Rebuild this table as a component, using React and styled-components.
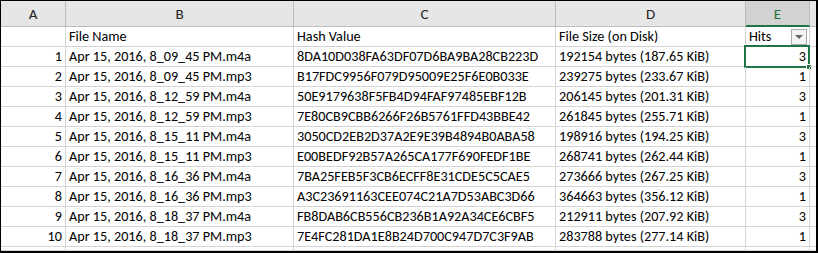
import React from "react";
import styled, { createGlobalStyle } from "styled-components";

const GlobalStyle = createGlobalStyle`
  body {
    margin: 0;
    background: #fff;
  }
  * {
    box-sizing: border-box;
  }
`;

const Sheet = styled.div`
  width: 818px;
  height: 253px;
  border-style: solid;
  border-color: #000;
  border-width: 1px 2px 2px 1px;
  overflow: hidden;
  font-family: Carlito, Lato, "Open Sans", sans-serif;
  font-size: 14.2px;
  color: #000;
`;

const Grid = styled.div`
  display: grid;
  grid-template-columns: 65px 228px 262px 190px 64px 1fr;
  grid-template-rows: 26px repeat(11, 20px) 1fr;
  height: 100%;
`;

const HeadCell = styled.div`
  background: ${(p) => (p.$active ? "#d2d2d2" : "#e6e6e6")};
  color: ${(p) => (p.$active ? "#217346" : "#222")};
  border-right: 1px solid ${(p) => (p.$last ? "transparent" : "#bdbdbd")};
  border-bottom: ${(p) => (p.$active ? "2px solid #217346" : "1px solid #bdbdbd")};
  display: flex;
  align-items: center;
  justify-content: center;
  font-size: 15px;
  padding-top: 1px;
`;

const Cell = styled.div`
  position: relative;
  border-right: 1px solid #d4d4d4;
  border-bottom: 1px solid #d4d4d4;
  display: flex;
  align-items: center;
  justify-content: ${(p) => (p.$right ? "flex-end" : "space-between")};
  padding: 0 3px 0 3px;
  white-space: nowrap;
  line-height: 19px;
`;

const FilterButton = styled.div`
  width: 16px;
  height: 16px;
  border: 1px solid #ababab;
  background: #f4f4f4;
  display: flex;
  align-items: center;
  justify-content: center;
  margin-right: -1px;
`;

const Arrow = styled.span`
  width: 0;
  height: 0;
  border-left: 4px solid transparent;
  border-right: 4px solid transparent;
  border-top: 4px solid #666;
`;

const Selection = styled.div`
  position: absolute;
  left: -2px;
  top: -2px;
  right: -1px;
  bottom: -2px;
  border: 2px solid #217346;
  pointer-events: none;
`;

const Handle = styled.div`
  position: absolute;
  right: -4px;
  bottom: -4px;
  width: 6px;
  height: 6px;
  background: #217346;
  border: 1px solid #fff;
`;

const columns = ["A", "B", "C", "D", "E"];

const rows = [
  ["Apr 15, 2016, 8_09_45 PM.m4a", "8DA10D038FA63DF07D6BA9BA28CB223D", "192154 bytes (187.65 KiB)", 3],
  ["Apr 15, 2016, 8_09_45 PM.mp3", "B17FDC9956F079D95009E25F6E0B033E", "239275 bytes (233.67 KiB)", 1],
  ["Apr 15, 2016, 8_12_59 PM.m4a", "50E9179638F5FB4D94FAF97485EBF12B", "206145 bytes (201.31 KiB)", 3],
  ["Apr 15, 2016, 8_12_59 PM.mp3", "7E80CB9CBB6266F26B5761FFD43BBE42", "261845 bytes (255.71 KiB)", 1],
  ["Apr 15, 2016, 8_15_11 PM.m4a", "3050CD2EB2D37A2E9E39B4894B0ABA58", "198916 bytes (194.25 KiB)", 3],
  ["Apr 15, 2016, 8_15_11 PM.mp3", "E00BEDF92B57A265CA177F690FEDF1BE", "268741 bytes (262.44 KiB)", 1],
  ["Apr 15, 2016, 8_16_36 PM.m4a", "7BA25FEB5F3CB6ECFF8E31CDE5C5CAE5", "273666 bytes (267.25 KiB)", 3],
  ["Apr 15, 2016, 8_16_36 PM.mp3", "A3C23691163CEE074C21A7D53ABC3D66", "364663 bytes (356.12 KiB)", 1],
  ["Apr 15, 2016, 8_18_37 PM.m4a", "FB8DAB6CB556CB236B1A92A34CE6CBF5", "212911 bytes (207.92 KiB)", 3],
  ["Apr 15, 2016, 8_18_37 PM.mp3", "7E4FC281DA1E8B24D700C947D7C3F9AB", "283788 bytes (277.14 KiB)", 1],
];

export default function App() {
  return (
    <>
      <GlobalStyle />
      <Sheet>
        <Grid>
          {columns.map((c) => (
            <HeadCell key={c} $active={c === "E"}>
              {c}
            </HeadCell>
          ))}
          <HeadCell $last />

          <Cell />
          <Cell>File Name</Cell>
          <Cell>Hash Value</Cell>
          <Cell>File Size (on Disk)</Cell>
          <Cell>
            Hits
            <FilterButton>
              <Arrow />
            </FilterButton>
          </Cell>
          <Cell />

          {rows.map((r, i) => (
            <React.Fragment key={i}>
              <Cell $right>{i + 1}</Cell>
              <Cell>{r[0]}</Cell>
              <Cell>{r[1]}</Cell>
              <Cell>{r[2]}</Cell>
              <Cell $right>
                {r[3]}
                {i === 0 && (
                  <Selection>
                    <Handle />
                  </Selection>
                )}
              </Cell>
              <Cell />
            </React.Fragment>
          ))}

          {columns.map((c) => (
            <Cell key={c} />
          ))}
          <Cell />
        </Grid>
      </Sheet>
    </>
  );
}
